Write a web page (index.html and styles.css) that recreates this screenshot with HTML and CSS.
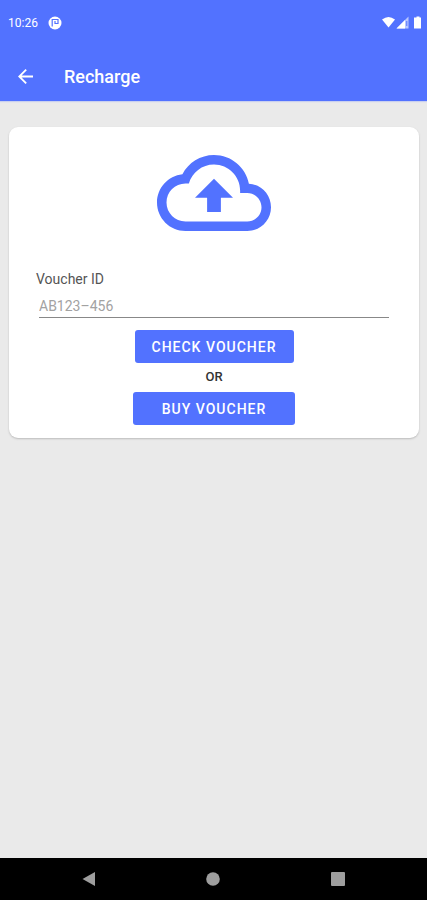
FILE: index.html
```html
<!DOCTYPE html>
<html lang="en">
<head>
<meta charset="utf-8">
<meta name="viewport" content="width=device-width, initial-scale=1">
<title>Recharge</title>
<link rel="stylesheet" href="styles.css">
</head>
<body>
<header class="top">
  <div class="status">
    <span class="time">10:26</span>
    <svg class="notice" viewBox="0 0 14 14" aria-hidden="true">
      <circle cx="7" cy="7" r="6.500" fill="#fff"/>
      <path d="M4.200 10.500V3.500H10V7.500H7V5" fill="none" stroke="#5272ff" stroke-width="1.200"/>
    </svg>
    <svg class="signals" viewBox="0 0 40 14" aria-hidden="true">
      <path d="M0 3.500Q6.500-1.500 13 3.500L6.500 11.500z" fill="#fff"/>
      <path d="M26.500 0.500V12.500H14.500z" fill="#fff" opacity=".6"/>
      <path d="M23 4V12.500H14.500z" fill="#fff"/>
      <path d="M24.800 5v5" stroke="#5272ff" stroke-width="1"/>
      <path d="M33 1.500h1.500V0.500h3v1H39v11h-7v-11z" fill="#fff"/>
    </svg>
  </div>
  <div class="appbar">
    <button class="back" type="button" aria-label="Back">
      <svg viewBox="4 4 16 16" aria-hidden="true"><path d="M20 11H7.830l5.590-5.590L12 4l-8 8 8 8 1.410-1.410L7.830 13H20z" fill="#fff"/></svg>
    </button>
    <h1 class="title">Recharge</h1>
  </div>
</header>
<main class="content">
  <form class="card">
    <svg class="cloud" viewBox="0 4 24 16" aria-hidden="true">
      <path d="M19.350 10.040C18.670 6.590 15.640 4 12 4 9.110 4 6.600 5.640 5.350 8.040 2.340 8.360 0 10.910 0 14c0 3.310 2.690 6 6 6h13c2.760 0 5-2.240 5-5 0-2.640-2.050-4.780-4.650-4.960zM19 18H6c-2.210 0-4-1.790-4-4s1.790-4 4-4h.710C7.370 7.690 9.480 6 12 6c3.040 0 5.500 2.460 5.500 5.500v.500H19c1.660 0 3 1.340 3 3s-1.340 3-3 3z"/>
      <path d="M8 13h2.550v3h2.900v-3H16l-4-4z"/>
    </svg>
    <label class="label" for="voucher">Voucher ID</label>
    <input class="field" id="voucher" type="text" placeholder="AB123–456">
    <button class="btn check" type="button">CHECK VOUCHER</button>
    <span class="or">OR</span>
    <button class="btn buy" type="button">BUY VOUCHER</button>
  </form>
</main>
<nav class="nav">
  <button type="button" aria-label="Back"><svg viewBox="0 0 14 14"><path d="M0.500 7L13 0v14z"/></svg></button>
  <button type="button" aria-label="Home"><svg viewBox="0 0 14 14"><circle cx="7" cy="7" r="6.800"/></svg></button>
  <button type="button" aria-label="Recent apps"><svg viewBox="0 0 14 14"><rect width="14" height="14" rx="1"/></svg></button>
</nav>
</body>
</html>
```
FILE: styles.css
```css
* {
  box-sizing: border-box;
}

body {
  margin: 0;
  min-height: 100vh;
  display: flex;
  flex-direction: column;
  background: #eaeaea;
  font-family: Roboto, sans-serif;
}

button {
  border: 0;
  padding: 0;
  background: none;
  font-family: inherit;
}

svg {
  display: block;
}

.top {
  background: #5272ff;
  color: #fff;
  box-shadow: 0 1px 1px #c9d0ef;
}

.status {
  display: flex;
  align-items: center;
  height: 45px;
  padding: 0 5px 0 8px;
}

.time {
  font-size: 12px;
  line-height: 16px;
}

.notice {
  width: 14px;
  height: 14px;
  margin-left: 10px;
}

.signals {
  width: 40px;
  height: 14px;
  margin-left: auto;
}

.appbar {
  display: flex;
  align-items: center;
  gap: 31px;
  height: 56px;
  padding: 7px 18px 0;
}

.back svg {
  width: 15px;
  height: 15px;
}

.title {
  margin: 0;
  font-size: 18px;
  line-height: 24px;
  font-weight: 500;
}

.content {
  flex: 1;
  padding: 26px 8px 0 9px;
}

.card {
  display: flex;
  flex-direction: column;
  align-items: center;
  padding: 28px 27px 13px;
  background: #fff;
  border-radius: 9px;
  box-shadow: 0 1px 2px #bbb;
}

.cloud {
  width: 114px;
  height: 76px;
  fill: #5272ff;
}

.label {
  align-self: flex-start;
  margin-top: 40px;
  font-size: 14px;
  line-height: 16px;
  color: #555;
}

.field {
  align-self: stretch;
  height: 31px;
  margin: 0 3px 12px;
  padding: 8px 0 0;
  border: 0;
  border-bottom: 1px solid #888;
  border-radius: 0;
  outline: 0;
  background: none;
  font-family: inherit;
  font-size: 14px;
  color: #333;
}

.field::placeholder {
  color: #a2a2a2;
}

.btn {
  height: 33px;
  border-radius: 3px;
  background: #5272ff;
  color: #fff;
  font-size: 14px;
  line-height: 16px;
  font-weight: 500;
  letter-spacing: 1px;
}

.check {
  padding: 0 17px;
}

.buy {
  padding: 0 29px;
}

.or {
  padding: 6px 0 7px;
  font-size: 13px;
  line-height: 16px;
  font-weight: 500;
  color: #333;
}

.nav {
  display: flex;
  justify-content: space-around;
  align-items: center;
  height: 42px;
  padding: 0 27px;
  background: #000;
}

.nav svg {
  width: 14px;
  height: 14px;
  fill: #9e9e9e;
}
```
